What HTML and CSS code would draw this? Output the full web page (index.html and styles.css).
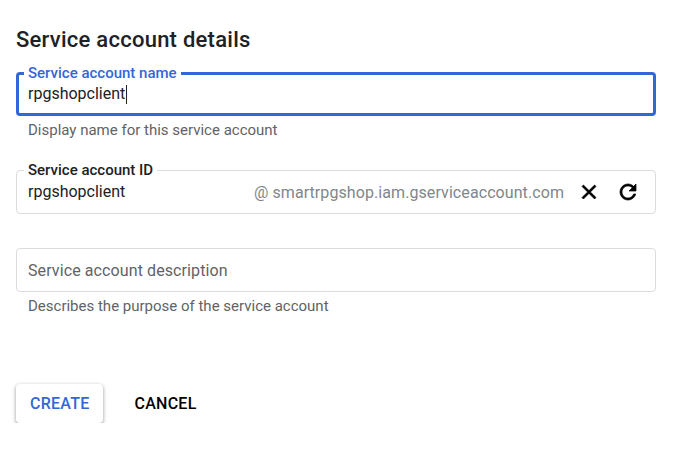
FILE: index.html
```html
<!DOCTYPE html>
<html lang="en">
<head>
	<meta charset="UTF-8">
	<title>Create service account</title>
	<link rel="stylesheet" href="styles.css">
</head>
<body>
<div id="wrap">
	<h1 class="title">Service account details</h1>
	<form id="form1">
		<div class="field">
			<div class="box focused">
				<label class="notch">Service account name</label>
				<span class="value">rpgshopclient</span><span class="caret"></span>
			</div>
			<p class="hint">Display name for this service account</p>
		</div>

		<div class="field short">
			<div class="box">
				<label class="notch dark">Service account ID</label>
				<span class="value grow">rpgshopclient</span>
				<span class="suffix">@ smartrpgshop.iam.gserviceaccount.com</span>
				<span class="icon">
					<svg width="24" height="24" viewBox="0 0 24 24"><path d="M19 6.41L17.59 5 12 10.59 6.41 5 5 6.41 10.59 12 5 17.59 6.41 19 12 13.41 17.59 19 19 17.59 13.41 12z"/></svg>
				</span>
				<span class="icon">
					<svg width="24" height="24" viewBox="0 0 24 24"><path d="M17.65 6.35C16.2 4.9 14.21 4 12 4c-4.42 0-7.99 3.58-7.99 8s3.57 8 7.99 8c3.73 0 6.84-2.55 7.73-6h-2.08c-.82 2.33-3.04 4-5.65 4-3.31 0-6-2.69-6-6s2.69-6 6-6c1.66 0 3.14.69 4.22 1.78L13 11h7V4l-2.35 2.35z"/></svg>
				</span>
			</div>
		</div>

		<div class="field">
			<div class="box">
				<span class="placeholder">Service account description</span>
			</div>
			<p class="hint">Describes the purpose of the service account</p>
		</div>

		<div class="actions">
			<button type="button" class="btn raised">Create</button>
			<button type="button" class="btn">Cancel</button>
		</div>
	</form>
</div>
</body>
</html>
```

FILE: styles.css
```css
body,h1,p{
	margin:0;
	padding:0;
}
body{
	font-family: Roboto, "Liberation Sans", Arial, sans-serif;
	color:#202124;
	background:#fff;
}
#wrap{
	width:640px;
	padding:26px 16px 0;
}
.title{
	font-size:22px;
	font-weight:500;
	letter-spacing:.25px;
	line-height:28px;
	margin-bottom:18px;
}
.field{
	min-height:98px;
}
.field.short{
	min-height:78px;
}
.box{
	position: relative;
	box-sizing: border-box;
	height:44px;
	border:1px solid #dadce0;
	border-radius:4px;
	padding:0 15px 0 11px;
	display:flex;
	align-items:center;
}
.box.focused{
	border:3px solid #3367d6;
	padding-left:9px;
}
.notch{
	position:absolute;
	left:7px;
	top:-10px;
	padding:0 4px;
	background:#fff;
	font-size:15px;
	font-weight:500;
	line-height:18px;
	color:#3367d6;
}
.focused .notch{
	left:5px;
	top:-11px;
}
.notch.dark{
	color:#202124;
}
.value{
	font-size:16px;
	line-height:20px;
	color:#202124;
}
.grow{
	flex:1;
}
.caret{
	width:1px;
	height:19px;
	background:#202124;
	margin-left:1px;
}
.suffix{
	font-size:16px;
	letter-spacing:.08px;
	color:#80868b;
	margin-right:13px;
}
.icon{
	display:flex;
	width:24px;
	height:24px;
	margin-left:15px;
}
.suffix + .icon{
	margin-left:0;
}
.icon svg{
	fill:#000;
	stroke:#000;
	stroke-width:.7px;
	stroke-linejoin:round;
}
.placeholder{
	font-size:16px;
	letter-spacing:.1px;
	color:#5f6368;
}
.hint{
	font-size:15px;
	line-height:20px;
	color:#5f6368;
	padding:4px 0 0 12px;
}
.actions{
	display:flex;
	gap:17px;
	margin-top:38px;
}
.btn{
	font-family: Roboto, "Liberation Sans", Arial, sans-serif;
	font-size:16px;
	font-weight:500;
	text-transform:uppercase;
	letter-spacing:.25px;
	height:39px;
	padding:0 14px;
	border:none;
	border-radius:4px;
	background:#fff;
	color:#000;
}
.btn.raised{
	color:#3367d6;
	box-shadow:0 1px 3px rgba(60,64,67,.35), 0 2px 4px 1px rgba(60,64,67,.18);
}
```
